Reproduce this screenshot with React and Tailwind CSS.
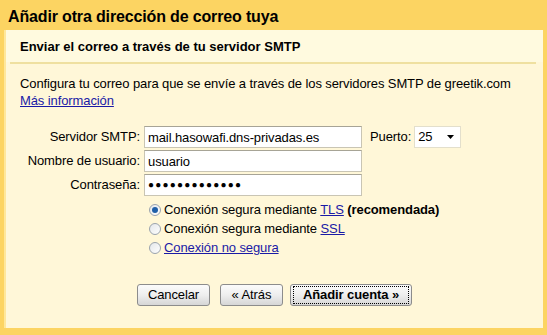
const font = { fontFamily: '"Liberation Sans", Arial, sans-serif' }

function Field({ label, children }) {
  return (
    <div className="flex items-center h-[22px]">
      <label className="w-[138px] pr-[4px] text-right">{label}</label>
      {children}
    </div>
  )
}

function Input({ value, password }) {
  return (
    <div className="w-[218px] h-[22px] bg-white border border-[#c9c5b4] border-t-[#a7a496] px-[3px] flex items-center leading-none">
      {password ? (
        <span className="text-[10px] tracking-[1.2px]">●●●●●●●●●●●●●</span>
      ) : (
        value
      )}
    </div>
  )
}

function Radio({ checked, children }) {
  return (
    <div className="flex items-center h-[19px]">
      <span className="w-[12px] h-[12px] rounded-full border border-[#9aa3ad] bg-gradient-to-br from-[#e4e7ea] to-[#fefefe] flex items-center justify-center mr-[3px]">
        {checked && <span className="w-[6px] h-[6px] rounded-full bg-[#1f5fa8]" />}
      </span>
      <span>{children}</span>
    </div>
  )
}

function Button({ children, bold, focus, className = '' }) {
  return (
    <button
      className={`h-[22px] rounded-[3px] border border-[#8c8c8c] bg-gradient-to-b from-[#fbfbfb] via-[#eeeeee] to-[#d6d6d6] px-[3px] text-[13px] text-black ${className}`}
    >
      <span
        className={`block px-[2px] leading-[16px] ${bold ? 'font-bold' : ''} ${focus ? 'outline outline-1 outline-dotted outline-black' : ''}`}
      >
        {children}
      </span>
    </button>
  )
}

export default function App() {
  return (
    <div className="w-[547px] h-[335px] bg-[#fcd462] overflow-hidden text-[13px] tracking-[-0.1px] text-black" style={font}>
      <h1 className="h-[30px] pl-[8px] pt-[7px] text-[16px] leading-[20px] tracking-[-0.15px] font-bold">
        Añadir otra dirección de correo tuya
      </h1>

      <div className="ml-[4px] w-[539px] h-[298px] bg-[#fff7d8] border-l-[2px] border-[#ffe79a] flex flex-col">
        <div className="h-[32px] bg-[#fffadf] px-[14px] pt-[9px] font-bold leading-[15px] tracking-[0px]">
          Enviar el correo a través de tu servidor SMTP
        </div>
        <div className="ml-[4px] w-[526px] h-[2px] bg-[#efe0a0]" />

        <div className="px-[14px] pt-[11px] leading-[17px]">
          <p>Configura tu correo para que se envíe a través de los servidores SMTP de greetik.com</p>
          <a href="#" className="text-[#1a1aa6] underline">Más información</a>
        </div>

        <div className="mt-[17px] flex flex-col gap-[2px]">
          <Field label="Servidor SMTP:">
            <Input value="mail.hasowafi.dns-privadas.es" />
            <span className="ml-[8px] mr-[3px]">Puerto:</span>
            <div className="w-[47px] h-[22px] bg-white border border-[#e3dfcc] flex items-center pl-[3px] pr-[6px] justify-between">
              <span>25</span>
              <svg width="7" height="4" viewBox="0 0 7 4">
                <path d="M0 0h7L3.5 4z" fill="#000" />
              </svg>
            </div>
          </Field>
          <Field label="Nombre de usuario:">
            <Input value="usuario" />
          </Field>
          <Field label="Contraseña:">
            <Input password />
          </Field>
        </div>

        <div className="mt-[4px] ml-[143px] flex flex-col">
          <Radio checked>
            Conexión segura mediante <a href="#" className="text-[#1a1aa6] underline">TLS</a>{' '}
            <b>(recomendada)</b>
          </Radio>
          <Radio>
            Conexión segura mediante <a href="#" className="text-[#1a1aa6] underline">SSL</a>
          </Radio>
          <Radio>
            <a href="#" className="text-[#1a1aa6] underline">Conexión no segura</a>
          </Radio>
        </div>

        <div className="mt-[27px] ml-[131px] flex items-center">
          <Button className="w-[73px]">Cancelar</Button>
          <Button className="ml-[10px] w-[63px]">« Atrás</Button>
          <Button bold focus className="ml-[7px] w-[122px]">Añadir cuenta »</Button>
        </div>
      </div>
    </div>
  )
}
